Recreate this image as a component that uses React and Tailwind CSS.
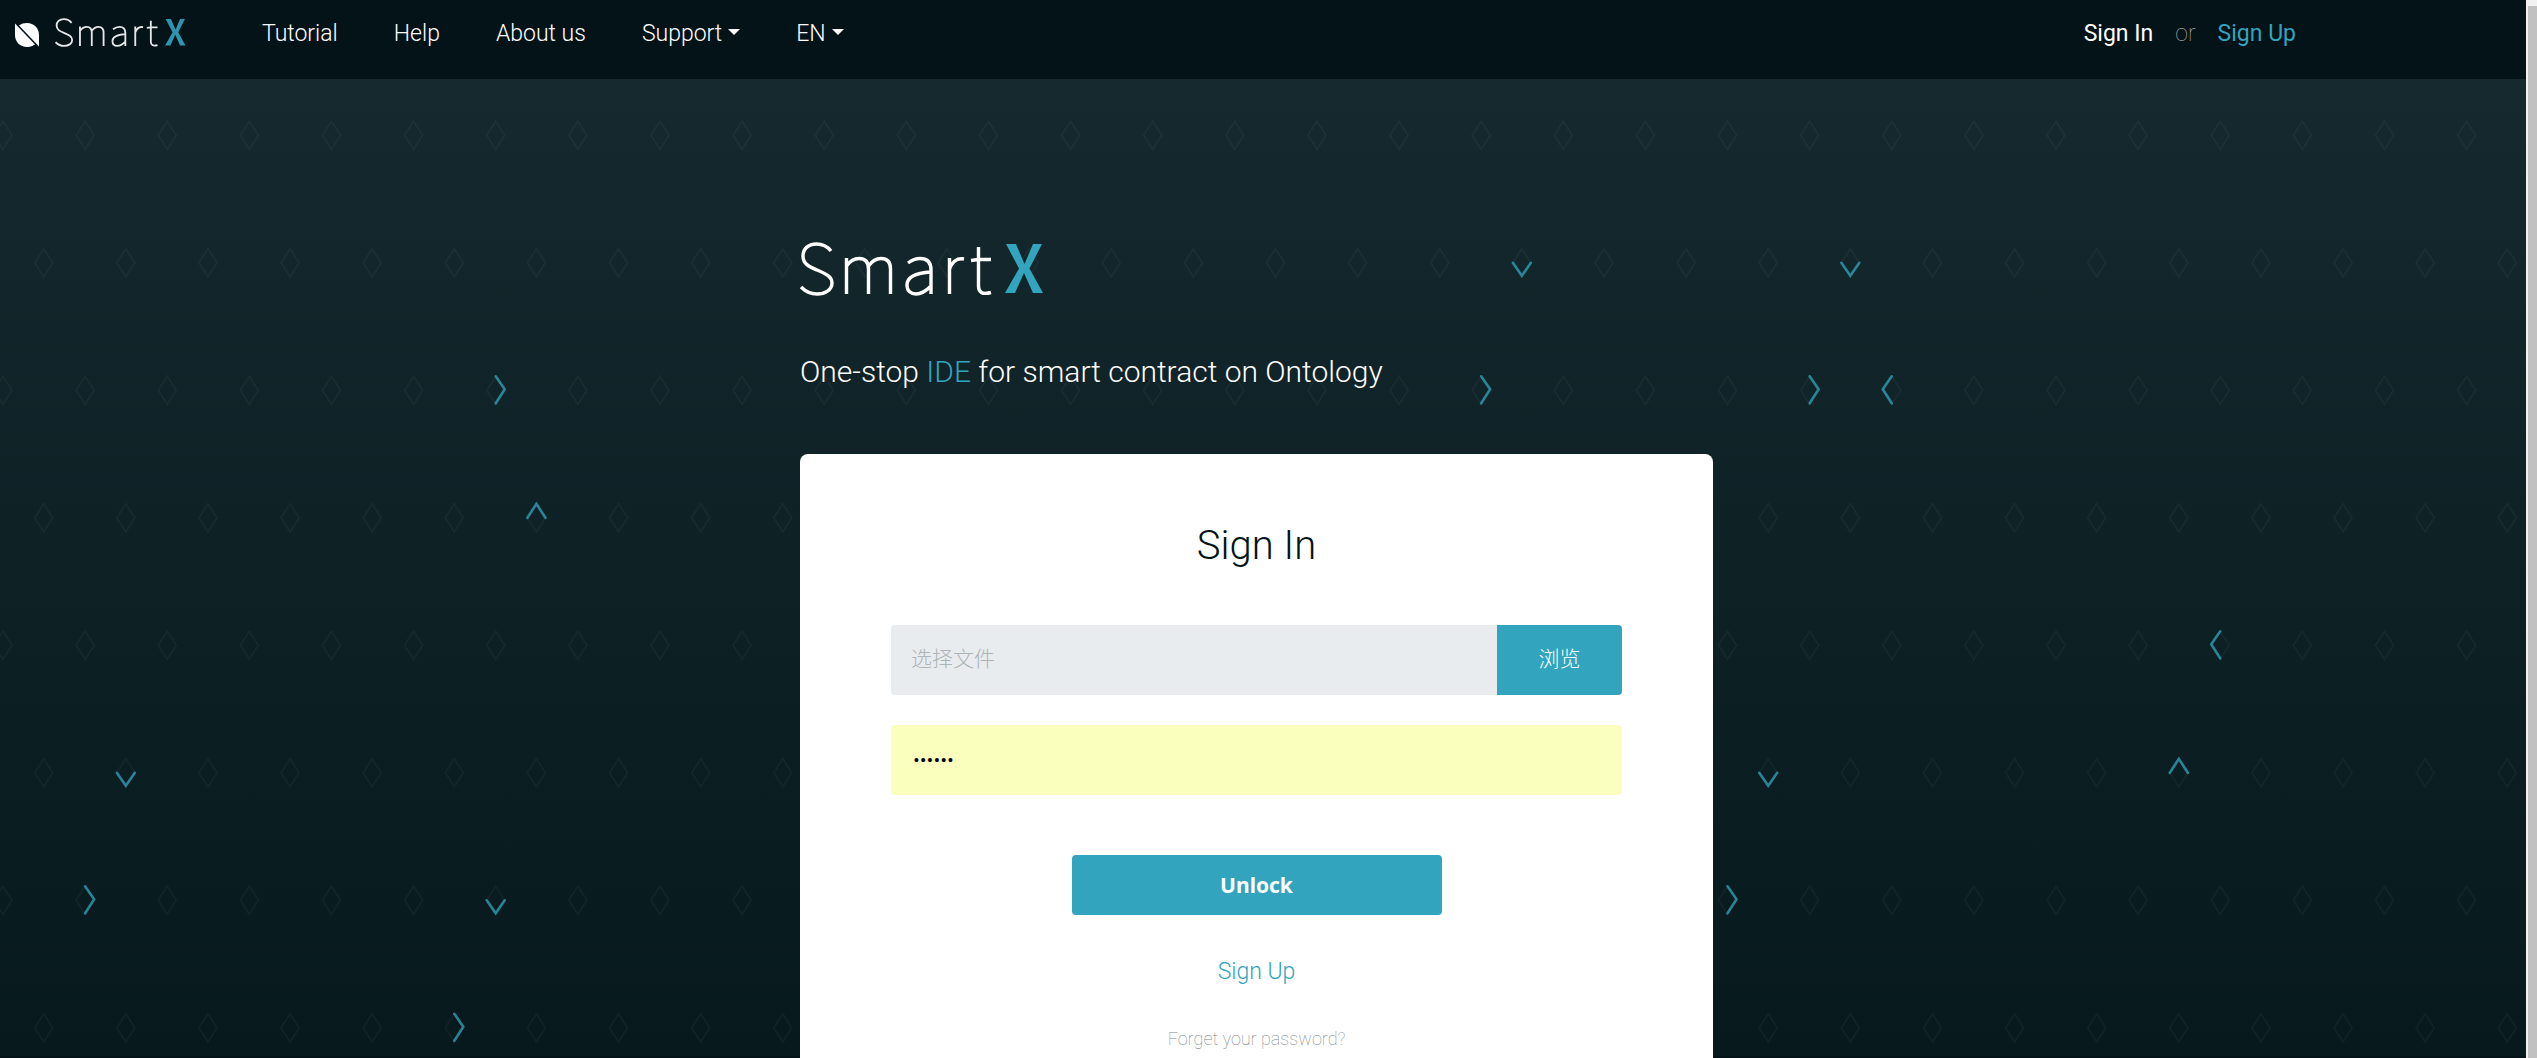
const TEAL = "#32a4be";

const ACCENTS = [
  [1, 18, "down"],
  [1, 22, "down"],
  [2, 6, "right"],
  [2, 18, "right"],
  [2, 22, "right"],
  [2, 23, "left"],
  [3, 6, "up"],
  [4, 27, "left"],
  [5, 1, "down"],
  [5, 21, "down"],
  [5, 26, "up"],
  [6, 1, "right"],
  [6, 6, "down"],
  [6, 21, "right"],
  [7, 5, "right"],
];

const CHEVRONS = {
  up: "M-9 0L0 -14L9 0",
  down: "M-9 0L0 13L9 0",
  left: "M0 -14L-9 -1L0 13",
  right: "M0 -14L9 -1L0 13",
};

const STEP_X = 82.12;
const STEP_Y = 127.5;

function center(row, col) {
  const x = (row % 2 === 0 ? 3 : 43.7) + col * STEP_X;
  const y = 56.3 + row * STEP_Y;
  return "translate(" + x + " " + y + ")";
}

function Pattern() {
  const cells = [];
  for (let row = 0; row < 8; row++) {
    for (let col = 0; col < 31; col++) cells.push([row, col]);
  }
  return (
    <svg className="absolute inset-0 h-full w-full" fill="none" aria-hidden="true">
      {cells.map(([r, c]) => (
        <path key={r + "-" + c} transform={center(r, c)} d="M0 -14L9 0L0 14L-9 0Z" stroke="#fff" strokeOpacity="0.04" strokeWidth="2" />
      ))}
      {ACCENTS.map(([r, c, dir]) => (
        <path key={r + "-" + c} transform={center(r, c)} d={CHEVRONS[dir]} stroke={TEAL} strokeOpacity="0.75" strokeWidth="2.6" strokeLinecap="round" />
      ))}
    </svg>
  );
}

function Wordmark({ className }) {
  return (
    <svg viewBox="0 0 244 54" className={className} fill="none" role="img" aria-label="SmartX">
      <g stroke="#fff" strokeWidth="3.4">
        <path d="M31 9C27 4 22 2 16.500 2C8 2 3 7 3 14C3 22 9 24.500 17 28C26 32 32 34.500 32 41C32 48 25 52 17 52C10 52 5 49 1 45" />
        <path d="M46.500 52V16M46.500 24C50 19 54 16.500 59 16.500C65 16.500 68.500 20 68.500 27V52M68.500 24C72 19 76 16.500 81 16.500C87 16.500 90.500 20 90.500 27V52" />
        <path d="M108 21C112 18 116 16.500 120 16.500C127 16.500 131 20 131 28V52M131 30C115 31 107 35 107 43C107 49 111 52 116 52C122 52 127 48 131 44" />
        <path d="M149.500 52V16M149.500 27C152 20 157 15.500 164 17" />
        <path d="M171 18.500L178 17.500H191M178.500 5V44C178.500 50 182 53 191 50.500" />
      </g>
      <path d="M206 2H216L224.500 22L233 2H242L229.500 26.500L243 51H233L224 31L215 51H205L219 26.500Z" fill={TEAL} />
    </svg>
  );
}

function Caret() {
  return <span className="mb-1 ml-[6px] border-x-[6px] border-t-[6px] border-x-transparent border-t-white" />;
}

export default function App() {
  return (
    <div className="flex h-screen overflow-hidden bg-[#031318] font-['Roboto','Noto_Sans_CJK_SC',sans-serif] font-light">
      <div className="flex min-w-0 flex-1 flex-col">
        <header className="flex h-[79px] shrink-0 items-start bg-[#031318] text-[23px] leading-8 text-white">
          <a href="#home" className="flex w-[262px] items-end gap-4 pl-[15px] pt-[18px]">
            <svg viewBox="0 0 24 24" className="h-6 w-6 fill-white" aria-hidden="true">
              <path d="M0 0.500L20 21.500C17 23.500 14 24 12 24C5 24 0 19 0 12Z" />
              <path d="M4 2.500C6 0.800 9 0 12 0C19 0 24 5 24 12V23.500Z" />
            </svg>
            <Wordmark className="h-[29px] w-[131px] opacity-90" />
          </a>
          <nav className="flex gap-14 pt-[18px]">
            <a href="#tutorial">Tutorial</a>
            <a href="#help">Help</a>
            <a href="#about">About us</a>
            <button className="flex items-center">Support<Caret /></button>
            <button className="flex items-center">EN<Caret /></button>
          </nav>
          <div className="ml-auto mr-[230px] flex gap-[22px] pt-[18px]">
            <a href="#signin" className="font-normal">Sign In</a>
            <span className="font-thin text-[#b4b4b4]">or</span>
            <a href="#signup" className="font-normal text-[#32a4be]">Sign Up</a>
          </div>
        </header>
        <main className="relative min-h-0 flex-1 overflow-hidden bg-linear-to-b from-[#15292e] to-[#07191d] pr-[13px]">
          <Pattern />
          <div className="absolute inset-x-0 bottom-0 h-[2px] bg-[#031318]" />
          <div className="relative mx-auto flex w-[913px] max-w-full flex-col pt-[163px]">
            <Wordmark className="h-[54px] w-[244px]" />
            <h1 className="mt-[56px] text-[30px] leading-10 text-white">
              One-stop <span className="text-[#32a4be]">IDE</span> for smart contract on Ontology
            </h1>
            <form className="mt-[62px] flex flex-col items-center rounded-t-lg bg-white px-[91px] pb-16 pt-[67px]">
              <h2 className="text-[40px] leading-[50px] text-[#031318]">Sign In</h2>
              <div className="mt-[54px] flex h-[70px] w-full overflow-hidden rounded text-[21px]">
                <input aria-label="选择文件" placeholder="选择文件" readOnly className="min-w-0 flex-1 bg-[#e8ecef] px-5 outline-none placeholder:text-[#acb4b4]" />
                <button type="button" className="w-[125px] bg-[#32a4be] text-white">浏览</button>
              </div>
              <input type="password" aria-label="Password" defaultValue="123456" className="mt-[30px] h-[70px] w-full rounded bg-[#faffbd] px-[22px] text-[21px] text-black outline-none" />
              <button type="button" className="mt-[60px] h-[60px] w-[370px] rounded bg-[#32a4be] pt-[2px] font-['Noto_Sans'] text-[21px] font-bold text-white">Unlock</button>
              <a href="#signup" className="mt-[41px] text-[23px] leading-8 text-[#32a4be]">Sign Up</a>
              <a href="#forgot" className="mt-[37px] text-[18px] font-thin leading-7 text-[#7d8787]">Forget your password?</a>
            </form>
          </div>
        </main>
      </div>
      <div className="w-[11px] shrink-0 bg-[#f1f1f1] pl-[2px] pt-[6px]" aria-hidden="true">
        <div className="h-full bg-[#c1c1c1]" />
      </div>
    </div>
  );
}
